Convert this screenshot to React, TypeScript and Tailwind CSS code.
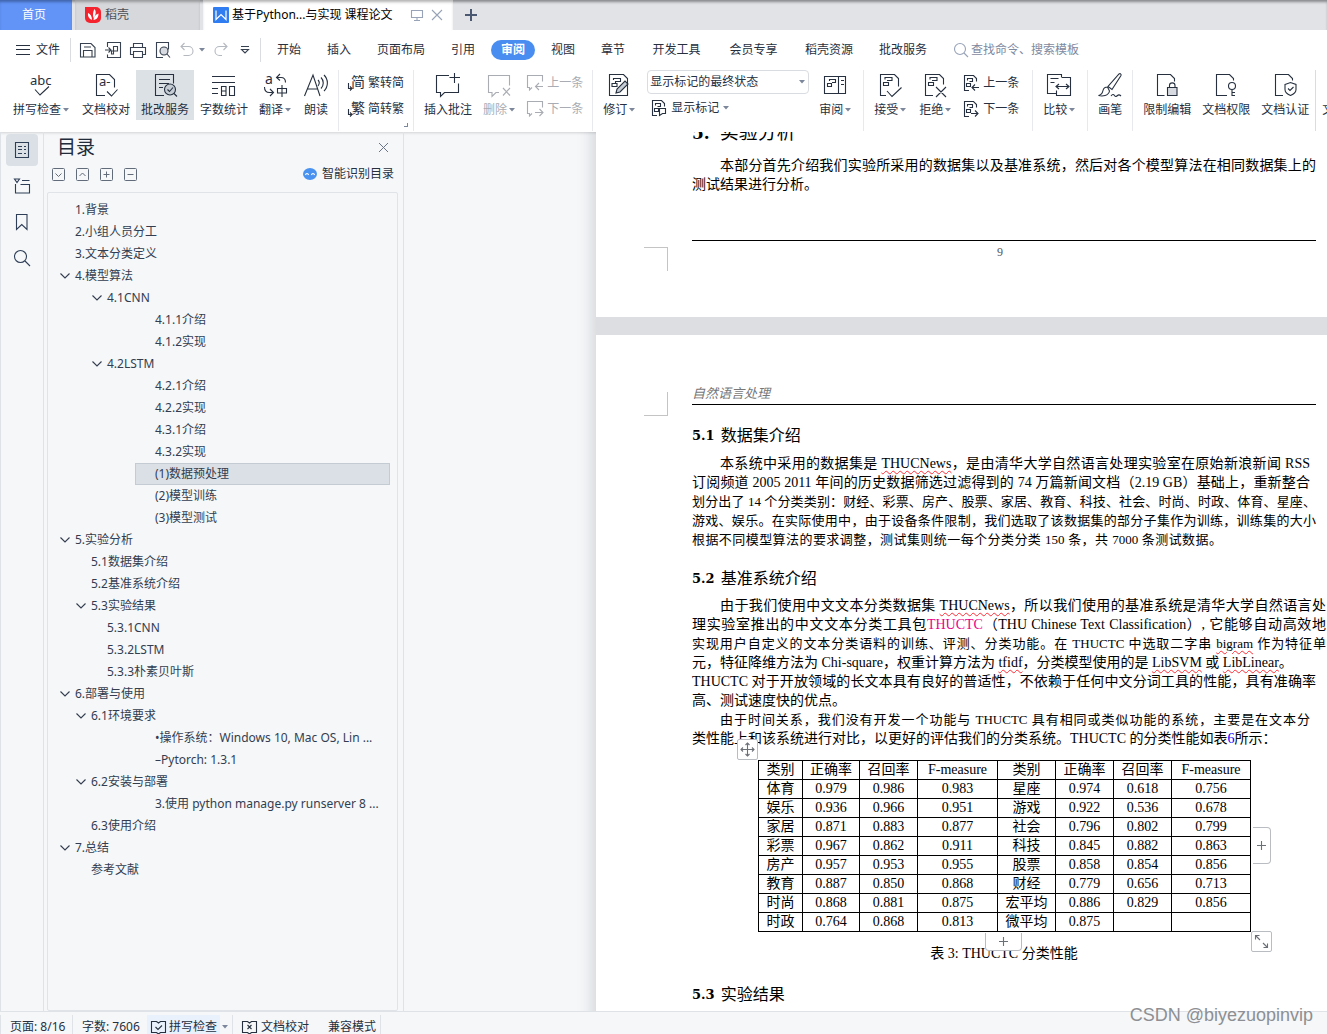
import { useState } from "react";
import type { ReactNode } from "react";
import { clsx } from "clsx";

const UI_FONT = "font-['Noto_Sans','Noto_Sans_CJK_SC',sans-serif]";
const DOC_FONT = "font-['Liberation_Serif','Noto_Sans_CJK_SC',serif]";

type IconProps = { w?: number; h?: number; className?: string; children: ReactNode };

function Icon({ w = 24, h = 24, className, children }: IconProps) {
  return (
    <svg
      width={w}
      height={h}
      viewBox={`0 0 ${w} ${h}`}
      fill="none"
      stroke="currentColor"
      strokeWidth="1.1"
      className={clsx("shrink-0 overflow-visible", className)}
      aria-hidden="true"
    >
      {children}
    </svg>
  );
}

function Caret({ className }: { className?: string }) {
  return (
    <svg width="6" height="4" viewBox="0 0 6 4" className={clsx("shrink-0 fill-[#7c879b]", className)} aria-hidden="true">
      <path d="M0 0h6L3 3.6z" />
    </svg>
  );
}

/* ---------- ribbon drawings ---------- */

const docOutline = "M9.5 22.5h-7v-21h13l4 4v3";

const icons = {
  spell: (
    <Icon>
      <text x="1" y="12" fontSize="13" fill="currentColor" stroke="none">abc</text>
      <path d="M6 16.5l5 5.5 9-8.5" />
    </Icon>
  ),
  proof: (
    <Icon>
      <path d="M11 22.5H2.5v-21h13l5 5v8" />
      <text x="5" y="13" fontSize="13" fill="currentColor" stroke="none">a-</text>
      <path d="M13 18.5l4.5 4.5 6-6.5" />
    </Icon>
  ),
  review: (
    <Icon>
      <path d="M11 22.5H2.5v-21h18v9M6 6.5h11M6 10.5h10M6 14.5h4" />
      <circle cx="17" cy="16.5" r="5.5" fill="#c5ccd4" />
      <path d="M14.5 16.5l2 2 3.5-4M21 20.5l3 3" />
    </Icon>
  ),
  count: (
    <Icon>
      <path d="M0 3.5h23M0 9.5h23M0 15.5h6M0 20.5h6M9.5 13.5H14v9H9.5zM17.5 13.5h5v9h-5zM9.5 18H14" />
    </Icon>
  ),
  translate: (
    <Icon>
      <text x="2" y="11" fontSize="14" fill="currentColor" stroke="none">a</text>
      <path d="M17 1l-3.5 3.5 3.5 3M14 4.5h4c3 0 4.5 2 4.5 5M1.5 14c0 3.5 2 5.5 5 5.5h3M7 16l3.5 3.5L7 23M14.5 15.5h9V20h-9zM19 12v12" />
    </Icon>
  ),
  read: (
    <Icon>
      <path d="M.5 23L9 2l7 21M3.5 16h10M14 7c1.5 1.5 1.5 4 0 6M17 4.5c3 3 3 8 0 11M20 2c4.5 4.5 4.5 11.5 0 16" />
    </Icon>
  ),
  comment: (
    <Icon>
      <path d="M13 2.5H.5v17h4v4l4-4h14v-9M18.5 0v10M13.5 4.5H24" />
    </Icon>
  ),
  remove: (
    <Icon>
      <path d="M12 19.5H9l-4 4v-4H1.5v-17h21v10M16 15l7 7.5M23 15l-7 7.5" />
    </Icon>
  ),
  revise: (
    <Icon>
      <path d="M2.5 1.5h14l4 4v17h-18zM6.5 7V5.5h7v3H8.5v2M5 10.5h5v3H5z" />
      <path d="M9 20l1-4 8-8 3 3-8 8z" fill="#c5ccd4" />
    </Icon>
  ),
  pane: (
    <Icon>
      <path d="M1.5 3.5h21v17h-21zM15.5 3.5v17M18 7.5h3M18 11.5h3M6.5 8V6.5h6v3H9M4.5 10.5h4v3h-4z" />
    </Icon>
  ),
  accept: (
    <Icon>
      <path d="M8 22.5H2.5v-21h14l4 4v8M7 6.5v-2h7v3H9M5.5 9.5h5v3h-5zM9 18l5 5.5 9.5-9" />
    </Icon>
  ),
  reject: (
    <Icon>
      <path d="M10 22.5H2.5v-21h14l4 4v6M7 6.5v-2h7v3H9M5.5 9.5h5v3h-5zM13 14l10 10M23 14L13 24" />
    </Icon>
  ),
  compare: (
    <Icon>
      <path d="M9 20.5H.5v-19h14v3M3.5 5.5h8M3.5 9.5h4M15 4.5h8.5v18h-14v-5M9.5 13.5h12M12 11l-3 2.5 3 2.5M19 11l3 2.5-3 2.5" />
    </Icon>
  ),
  brush: (
    <Icon>
      <path d="M22 .5c1 .5 1.5 1 1 2l-9 14-4-3L21 1zM9.5 14c-2.5 0-4 1-4.5 3.5S3 22 .5 22.5c4 1 10 .5 11-4.5l-2-4M13 23c1.5-2 2.5-2 3.5-.5s2 1 3 0 2-1 3.5.5" />
    </Icon>
  ),
  lock: (
    <Icon>
      <path d={docOutline} />
      <path d="M12.5 14.5H22v8h-9.5z" fill="#d7dbe1" />
      <path d="M14.5 14.5v-2c0-3.5 5.5-3.5 5.5 0v2" />
    </Icon>
  ),
  key: (
    <Icon>
      <path d="M13 22.5H2.5v-21h13l4 4v2" />
      <circle cx="18" cy="13" r="3.5" />
      <path d="M18 16.5V23M18 19.5h3M18 22.5h3" />
    </Icon>
  ),
  shield: (
    <Icon>
      <path d="M10 22.5H2.5v-21h13l4 4v2M12 11.5l5.5-2 5.5 2v5c0 3-3 5-5.5 6-2.5-1-5.5-3-5.5-6zM15 15.5l2 2 3.5-3.5" />
    </Icon>
  ),
};

function PrevComment({ next = false }: { next?: boolean }) {
  return (
    <Icon w={16} h={16}>
      <path d="M5 12.5L2.5 15v-2.5h-2V.5h15v6" />
      {next ? <path d="M8 11.5h7.5M12.5 8l3.5 3.5-3.5 3.5" /> : <path d="M16 11.5H8.5M12 8l-3.5 3.5L12 15" />}
    </Icon>
  );
}

function PrevChange({ next = false }: { next?: boolean }) {
  return (
    <Icon w={16} h={16}>
      <path d="M6 15.5H1.5V.5h9l3 3v3M4.5 5.5v-2h5v3h-3M3.5 8.5h4v3h-4z" />
      {next ? <path d="M8 12.5h7M12 9.5l3 3-3 3" /> : <path d="M16 12.5H9M12 9.5l-3 3 3 3" />}
    </Icon>
  );
}

function Convert({ glyph }: { glyph: string }) {
  return (
    <Icon w={16} h={16}>
      <text x="3" y="12" fontSize="14" fill="currentColor" stroke="none">{glyph}</text>
      <path d="M.5 8v5.5H4M2 11.5l2 2-2 2" />
    </Icon>
  );
}

/* ---------- ribbon controls ---------- */

type BigProps = { icon: ReactNode; label: string; caret?: boolean; active?: boolean; disabled?: boolean };

function BigButton({ icon, label, caret, active, disabled }: BigProps) {
  return (
    <button
      disabled={disabled}
      className={clsx(
        "flex h-[50px] shrink-0 flex-col items-center pt-[3px]",
        caret ? "pr-[7px] pl-[5px]" : "px-[5px]",
        active && "bg-[#dce1e6]",
        disabled ? "text-[#a9acb2]" : "text-[#26303f]",
      )}
    >
      {icon}
      <span className="mt-[5px] flex items-center gap-[2px] leading-4">
        {label}
        {caret && <Caret />}
      </span>
    </button>
  );
}

function SmallButton({ icon, label, disabled }: { icon: ReactNode; label: string; disabled?: boolean }) {
  return (
    <button
      disabled={disabled}
      className={clsx("flex h-[26px] items-center gap-1 px-1", disabled ? "text-[#a9acb2]" : "text-[#26303f]")}
    >
      {icon}
      {label}
    </button>
  );
}

function Divider() {
  return <div className="mx-1 h-[61px] w-px shrink-0 bg-[#e7e9ec]" />;
}

function TabBar() {
  return (
    <header className="flex h-[30px] shrink-0 items-stretch bg-[#e1e3e7] shadow-[inset_0_3px_3px_-1px_rgba(0,0,0,0.4)]">
      <button className="w-[72px] shrink-0 bg-[#5b8ff9]/95 pr-1 text-white shadow-[inset_0_3px_3px_-1px_rgba(0,0,0,0.3)]">首页</button>
      <button className="ml-[3px] flex w-[125px] shrink-0 items-center gap-1 bg-[#d6d8db] pl-[10px] text-[#4b4f57] shadow-[inset_0_3px_3px_-1px_rgba(0,0,0,0.3)]">
        <svg width="16" height="16" viewBox="0 0 16 16" aria-hidden="true">
          <path d="M0 0h11a5 5 0 0 1 5 5v6a5 5 0 0 1-5 5H5a5 5 0 0 1-5-5z" fill="#f5232e" />
          <path d="M9.5 2c2 2.5 1.5 6-1 9-1-3-.5-6.5 1-9zM3 6c2.5 1 4 3.5 4 7-2.5-1-4.5-3.5-4-7zM13.5 6.5c0 3.5-1.5 6-5 6.5 0-3 2-5.5 5-6.5z" fill="#fff" />
        </svg>
        稻壳
      </button>
      <div className="ml-[3px] flex w-[250px] shrink-0 items-center bg-white pl-[10px] text-black shadow-[inset_0_3px_3px_-1px_rgba(0,0,0,0.3)]">
        <svg width="16" height="16" viewBox="0 0 16 16" aria-hidden="true">
          <rect width="16" height="16" rx="1" fill="#2f7df0" />
          <path d="M3 3.5v9l5-5 5 5v-9" fill="none" stroke="#fff" strokeWidth="1.2" />
        </svg>
        <span className="ml-[3px] whitespace-nowrap">基于Python...与实现 课程论文</span>
        <div className="ml-auto flex items-center gap-2 pr-[10px] text-[#98a3b8]">
          <button aria-label="窗口" className="flex">
            <Icon w={12} h={12}>
              <path d="M.5 1.5h11v7H.5zM6 8.5v3M3 11.5h6" />
            </Icon>
          </button>
          <button aria-label="关闭标签" className="flex">
            <Icon w={12} h={12}>
              <path d="M1 1l10 10M11 1L1 11" />
            </Icon>
          </button>
        </div>
      </div>
      <button aria-label="新建" className="flex w-9 items-center justify-center text-[#4a5872]">
        <Icon w={12} h={12}>
          <path d="M6 0v12M0 6h12" strokeWidth="2" />
        </Icon>
      </button>
    </header>
  );
}

const menuTabs = ["开始", "插入", "页面布局", "引用", "审阅", "视图", "章节", "开发工具", "会员专享", "稻壳资源", "批改服务"];

function MenuBar() {
  const [current, setCurrent] = useState("审阅");
  return (
    <nav className="flex h-9 shrink-0 items-center bg-white pt-1 pl-4 text-[#26303f]">
      <button className="flex items-center gap-[6px]">
        <Icon w={14} h={10}>
          <path d="M0 .5h14M0 4.5h14M0 9.5h14" />
        </Icon>
        文件
      </button>
      <div className="ml-[10px] h-6 w-px bg-[#d9dce1]" />
      <div className="flex w-[189px] items-center gap-[9px] pl-[9px] text-[#37414f]">
        <button aria-label="保存">
          <Icon w={16} h={16}>
            <path d="M.5 1.5H11l4 4V15H.5zM3.5 15V8.5H12V15M4 5h7" />
          </Icon>
        </button>
        <button aria-label="输出为PDF">
          <Icon w={16} h={16}>
            <path d="M2.5 5V.5h13v15h-13v-3M0 8h6M3.5 5.5L6 8l-2.5 2.5M8.5 12V4.5h4V9h-6v3z" />
          </Icon>
        </button>
        <button aria-label="打印">
          <Icon w={16} h={16}>
            <path d="M3.5 5V1.5h9V5M3.5 12.5h-3v-7h15v7h-3M3.5 9.5h9v6h-9z" />
          </Icon>
        </button>
        <button aria-label="打印预览">
          <Icon w={16} h={16}>
            <path d="M8 15.5H1.5V.5h12v7" />
            <circle cx="9" cy="9" r="4" fill="#d7dbe1" />
            <path d="M12 12l3 3.5" />
          </Icon>
        </button>
        <button aria-label="撤销" className="flex items-center gap-[5px] text-[#b4b8bf]">
          <Icon w={14} h={16}>
            <path d="M4.5 1L1 4.5 4.5 8M1 4.5h7.5a4.5 4.5 0 0 1 0 9h-5" />
          </Icon>
          <Caret />
        </button>
        <button aria-label="恢复" className="text-[#b4b8bf]">
          <Icon w={14} h={16}>
            <path d="M9.5 1L13 4.5 9.5 8M13 4.5H5.5a4.5 4.5 0 0 0 0 9H8" />
          </Icon>
        </button>
        <button aria-label="更多" className="ml-1">
          <Icon w={8} h={8}>
            <path d="M0 .5h8M.5 3.5h7L4 7z" />
          </Icon>
        </button>
      </div>
      <div className="h-6 w-px bg-[#d9dce1]" />
      <div className="flex items-center pl-[3px]">
        {menuTabs.map((tab) => (
          <button
            key={tab}
            onClick={() => setCurrent(tab)}
            className={clsx(
              "flex h-5 shrink-0 items-center justify-center whitespace-nowrap",
              tab === "开发工具" || tab === "会员专享" ? "w-[77px]" : tab.length === 2 ? "w-[50px]" : "w-[74px]",
            )}
          >
            <span className={clsx(tab === current && "rounded-full bg-[#4a8df0] px-[10px] leading-5 font-bold text-white")}>
              {tab}
            </span>
          </button>
        ))}
      </div>
      <label className="ml-[14px] flex min-w-0 flex-1 items-center gap-[2px] text-[#98a3b8]">
        <Icon w={15} h={15}>
          <circle cx="6" cy="6" r="5.5" />
          <path d="M10 10l4 4" />
        </Icon>
        <input
          aria-label="查找命令"
          placeholder="查找命令、搜索模板"
          className="w-full min-w-0 bg-transparent outline-none placeholder:text-[#7e89a0]"
        />
      </label>
    </nav>
  );
}

function Ribbon() {
  return (
    <div className="relative z-20 flex h-[66px] shrink-0 items-start gap-px overflow-hidden bg-white pt-1 pl-2 whitespace-nowrap">
      <BigButton icon={icons.spell} label="拼写检查" caret />
      <BigButton icon={icons.proof} label="文档校对" />
      <BigButton icon={icons.review} label="批改服务" active />
      <BigButton icon={icons.count} label="字数统计" />
      <BigButton icon={icons.translate} label="翻译" caret />
      <BigButton icon={icons.read} label="朗读" />
      <Divider />
      <div className="flex w-16 shrink-0 flex-col">
        <SmallButton icon={<Convert glyph="简" />} label="繁转简" />
        <SmallButton icon={<Convert glyph="繁" />} label="简转繁" />
        <div className="mt-px size-1 self-end border-r border-b border-[#7c879b]" />
      </div>
      <Divider />
      <BigButton icon={icons.comment} label="插入批注" />
      <BigButton icon={icons.remove} label="删除" caret disabled />
      <div className="flex w-16 shrink-0 flex-col">
        <SmallButton icon={<PrevComment />} label="上一条" disabled />
        <SmallButton icon={<PrevComment next />} label="下一条" disabled />
      </div>
      <Divider />
      <BigButton icon={icons.revise} label="修订" caret />
      <div className="ml-1 flex w-[162px] shrink-0 flex-col">
        <div className="relative flex h-6 items-center rounded-sm border border-[#d9dce1]">
          <select aria-label="显示标记的状态" className="h-full w-full appearance-none bg-transparent pl-[2px] text-[#26303f] outline-none">
            <option>显示标记的最终状态</option>
            <option>显示标记的原始状态</option>
          </select>
          <Caret className="pointer-events-none absolute right-[3px]" />
        </div>
        <button className="flex h-7 items-center gap-1 pl-1 text-[#26303f]">
          <Icon w={16} h={16}>
            <path d="M6 15.5H1.5V.5h9l3 3v3M4.5 5.5v-2h5v3h-3M3.5 8.5h4v3h-4zM8.5 8.5h6v5h-3l-3 2z" />
          </Icon>
          显示标记
          <Caret />
        </button>
      </div>
      <div className="w-[3px] shrink-0" />
      <BigButton icon={icons.pane} label="审阅" caret />
      <Divider />
      <BigButton icon={icons.accept} label="接受" caret />
      <BigButton icon={icons.reject} label="拒绝" caret />
      <div className="mr-1 flex w-16 shrink-0 flex-col">
        <SmallButton icon={<PrevChange />} label="上一条" />
        <SmallButton icon={<PrevChange next />} label="下一条" />
      </div>
      <Divider />
      <BigButton icon={icons.compare} label="比较" caret />
      <Divider />
      <BigButton icon={icons.brush} label="画笔" />
      <Divider />
      <BigButton icon={icons.lock} label="限制编辑" />
      <BigButton icon={icons.key} label="文档权限" />
      <BigButton icon={icons.shield} label="文档认证" />
      <div className="h-[61px] w-px shrink-0 bg-[#d9dce1]" />
      <BigButton icon={<Icon><path d={docOutline} /></Icon>} label="文档定稿" />
    </div>
  );
}

/* ---------- outline panel ---------- */

type OutlineItem = { text: string; level: 0 | 1 | 2 | 5; open?: boolean };

const outline: OutlineItem[] = [
  { text: "1.背景", level: 0 },
  { text: "2.小组人员分工", level: 0 },
  { text: "3.文本分类定义", level: 0 },
  { text: "4.模型算法", level: 0, open: true },
  { text: "4.1CNN", level: 2, open: true },
  { text: "4.1.1介绍", level: 5 },
  { text: "4.1.2实现", level: 5 },
  { text: "4.2LSTM", level: 2, open: true },
  { text: "4.2.1介绍", level: 5 },
  { text: "4.2.2实现", level: 5 },
  { text: "4.3.1介绍", level: 5 },
  { text: "4.3.2实现", level: 5 },
  { text: "(1)数据预处理", level: 5 },
  { text: "(2)模型训练", level: 5 },
  { text: "(3)模型测试", level: 5 },
  { text: "5.实验分析", level: 0, open: true },
  { text: "5.1数据集介绍", level: 1 },
  { text: "5.2基准系统介绍", level: 1 },
  { text: "5.3实验结果", level: 1, open: true },
  { text: "5.3.1CNN", level: 2 },
  { text: "5.3.2LSTM", level: 2 },
  { text: "5.3.3朴素贝叶斯", level: 2 },
  { text: "6.部署与使用", level: 0, open: true },
  { text: "6.1环境要求", level: 1, open: true },
  { text: "•操作系统：Windows 10, Mac OS, Lin ...", level: 5 },
  { text: "–Pytorch: 1.3.1", level: 5 },
  { text: "6.2安装与部署", level: 1, open: true },
  { text: "3.使用 python manage.py runserver 8 ...", level: 5 },
  { text: "6.3使用介绍", level: 1 },
  { text: "7.总结", level: 0, open: true },
  { text: "参考文献", level: 1 },
];

const indents = { 0: "ml-0", 1: "ml-4", 2: "ml-8", 5: "ml-20" };

const foldButtons = [
  { label: "展开", d: "M3.5 5.5l3 3 3-3" },
  { label: "收起", d: "M3.5 8l3-3 3 3" },
  { label: "增加级别", d: "M6.5 3.5v6M3.5 6.5h6" },
  { label: "减少级别", d: "M3.5 6.5h6" },
];

function Rail() {
  const button = "flex size-8 items-center justify-center rounded-sm";
  return (
    <aside className="flex w-11 shrink-0 flex-col items-center gap-1 border-x border-[#dfe3e8] pt-[2px] text-[#2f3e57]">
      <button aria-label="目录" className={clsx(button, "bg-[#dae0e6]")}>
        <Icon w={14} h={16}>
          <path d="M.5.5h13v15H.5zM3 4.5h4M9 4.5h2M3 7.5h4M9 7.5h2M3 11.5h4M9 11.5h2" />
        </Icon>
      </button>
      <button aria-label="章节" className={button}>
        <Icon w={16} h={16}>
          <path d="M8 2.500h7.500M1.500 6v9h14V6.500h-9M.5 1h5L3 4.500z" />
        </Icon>
      </button>
      <button aria-label="书签" className={button}>
        <Icon w={12} h={18}>
          <path d="M.5 1.5H11v15l-5.250-5-5.250 5z" />
        </Icon>
      </button>
      <button aria-label="查找" className={button}>
        <Icon w={16} h={16}>
          <circle cx="6.5" cy="6.5" r="6" />
          <path d="M11 11l5 5" />
        </Icon>
      </button>
    </aside>
  );
}

function OutlinePanel() {
  const [selected, setSelected] = useState("(1)数据预处理");
  return (
    <section className="flex w-[360px] shrink-0 flex-col border-r border-[#dfe3e8] pr-[5px] pl-[3px] text-[#333d4f]">
      <div className="flex h-[30px] items-center justify-between pr-[9px] pl-[10px]">
        <h2 className="text-[19px] leading-6 text-[#222b3a]">目录</h2>
        <button aria-label="关闭" className="text-[#6b7587]">
          <Icon w={11} h={11}>
            <path d="M1 1l9 9M10 1l-9 9" strokeWidth="1" />
          </Icon>
        </button>
      </div>
      <div className="flex h-[30px] items-center pb-[6px] pl-[5px]">
        <div className="flex gap-[11px] text-[#626b7a]">
          {foldButtons.map((b) => (
            <button key={b.label} aria-label={b.label} className="flex">
              <Icon w={13} h={13}>
                <rect x="0.5" y="0.5" width="12" height="12" rx="1" strokeWidth="1" />
                <path d={b.d} strokeWidth="1" />
              </Icon>
            </button>
          ))}
        </div>
        <button className="ml-auto flex items-center gap-[5px] pr-1 text-[#26303f]">
          <svg width="14" height="12" viewBox="0 0 14 12" aria-hidden="true">
            <ellipse cx="7" cy="6" rx="7" ry="6" fill="#4a92f0" />
            <path d="M2.500 7c.5-2 2.500-2 3 0M8.500 7c.5-2 2.500-2 3 0" fill="none" stroke="#fff" strokeWidth="1.2" />
          </svg>
          智能识别目录
        </button>
      </div>
      <ul className="flex-1 rounded-xs border border-[#e0e4e9] px-[7px] pt-[6px]">
        {outline.map((item) => (
          <li key={item.text} className={clsx("flex h-[22px]", indents[item.level])}>
            <button
              onClick={() => setSelected(item.text)}
              className={clsx(
                "flex min-w-0 flex-1 items-center border text-left whitespace-nowrap",
                item.text === selected ? "border-[#c5cbd3] bg-[#dae0e6]" : "border-transparent",
              )}
            >
              <span className="flex w-[19px] shrink-0 justify-center pr-px">
                {item.open && (
                  <Icon w={10} h={6}>
                    <path d="M.5.5L5 5 9.5.5" />
                  </Icon>
                )}
              </span>
              {item.text}
            </button>
          </li>
        ))}
      </ul>
    </section>
  );
}

/* ---------- document ---------- */

const lineKinds = {
  full: "w-[624px] [text-align-last:justify]",
  wide: "w-[634px] [text-align-last:justify]",
  short: "w-[618px] [text-align-last:justify]",
  partial: "w-[530px] [text-align-last:justify]",
  end: "",
};

type LineProps = { kind?: keyof typeof lineKinds; indent?: boolean; dense?: boolean; children: ReactNode };

function Line({ kind = "full", indent, dense, children }: LineProps) {
  return (
    <span
      className={clsx(
        "block whitespace-nowrap leading-[19px]",
        lineKinds[kind],
        indent && "pl-7",
        dense ? "text-[13px]" : "text-[14px]",
      )}
    >
      {children}
    </span>
  );
}

function Typo({ children }: { children: ReactNode }) {
  return <span className="underline decoration-red-500 decoration-wavy decoration-1 underline-offset-2">{children}</span>;
}

function Heading({ no, children }: { no: string; children: ReactNode }) {
  return (
    <h3 className="flex items-center gap-[6px] text-base leading-6">
      <span className="font-['DejaVu_Serif',serif] text-[13px] font-bold">{no}</span>
      {children}
    </h3>
  );
}

const tableHead = ["类别", "正确率", "召回率", "F-measure", "类别", "正确率", "召回率", "F-measure"];
const tableRows = [
  ["体育", "0.979", "0.986", "0.983", "星座", "0.974", "0.618", "0.756"],
  ["娱乐", "0.936", "0.966", "0.951", "游戏", "0.922", "0.536", "0.678"],
  ["家居", "0.871", "0.883", "0.877", "社会", "0.796", "0.802", "0.799"],
  ["彩票", "0.967", "0.862", "0.911", "科技", "0.845", "0.882", "0.863"],
  ["房产", "0.957", "0.953", "0.955", "股票", "0.858", "0.854", "0.856"],
  ["教育", "0.887", "0.850", "0.868", "财经", "0.779", "0.656", "0.713"],
  ["时尚", "0.868", "0.881", "0.875", "宏平均", "0.886", "0.829", "0.856"],
  ["时政", "0.764", "0.868", "0.813", "微平均", "0.875", "", ""],
];
const columns = ["w-11", "w-[57px]", "w-[58px]", "w-20", "w-[58px]", "w-[58px]", "w-[58px]", "w-[79px]"];

function ResultTable() {
  const handle = "absolute z-10 flex items-center justify-center border border-[#b9bcc1] bg-white text-[#6b6f76]";
  return (
    <div className="relative ml-[66px] w-[493px]">
      <table className="w-full table-fixed border-collapse text-center text-[14px] leading-[18px]">
        <colgroup>
          {columns.map((c, i) => (
            <col key={i} className={c} />
          ))}
        </colgroup>
        <thead>
          <tr>
            {tableHead.map((h, i) => (
              <th key={i} className="h-[19px] border border-black p-0 font-normal whitespace-nowrap">{h}</th>
            ))}
          </tr>
        </thead>
        <tbody>
          {tableRows.map((row) => (
            <tr key={row[0]}>
              {row.map((cell, i) => (
                <td key={i} className="h-[19px] border border-black p-0">{cell}</td>
              ))}
            </tr>
          ))}
        </tbody>
      </table>
      <button aria-label="移动表格" className={clsx(handle, "-top-[21px] -left-[21px] size-[21px] rounded-xs")}>
        <Icon w={15} h={15}>
          <path d="M7.5 1v13M1 7.5h13M5.5 3l2-2 2 2M5.5 12l2 2 2-2M3 5.5l-2 2 2 2M12 5.5l2 2-2 2" />
        </Icon>
      </button>
      <button aria-label="添加列" className={clsx(handle, "top-[67px] left-[495px] h-[37px] w-[18px] rounded-r-sm border-l-0")}>
        <Icon w={9} h={9}>
          <path d="M4.5 0v9M0 4.5h9" />
        </Icon>
      </button>
      <button aria-label="添加行" className={clsx(handle, "top-[173px] left-[227px] h-[18px] w-[37px] rounded-b-sm border-t-0 bg-[#f7f7f7]")}>
        <Icon w={9} h={9}>
          <path d="M4.5 0v9M0 4.5h9" />
        </Icon>
      </button>
      <button aria-label="缩放表格" className={clsx(handle, "top-[171px] left-[493px] size-[21px] rounded-xs")}>
        <Icon w={15} h={15}>
          <path d="M1.5 5.5v-4h4M2 2l4 4M13.5 9.5v4h-4M13 13l-4-4" />
        </Icon>
      </button>
    </div>
  );
}

function Document() {
  return (
    <main className={clsx("min-w-0 flex-1 overflow-hidden pl-48 text-black", DOC_FONT)}>
      <div className="bg-[#dcdee1] shadow-[-2px_0_14px_2px_rgba(60,65,75,0.18)]">
        <article className="-mt-[14px] h-[199px] bg-white">
          <h2 className="flex items-center gap-[10px] pl-24 text-[19px] leading-[30px]">
            <span className="font-['DejaVu_Serif',serif] text-[17px] font-bold">5.</span>
            实验分析
          </h2>
          <p className="mt-2 pl-24">
            <Line indent>本部分首先介绍我们实验所采用的数据集以及基准系统，然后对各个模型算法在相同数据集上的</Line>
            <Line kind="end">测试结果进行分析。</Line>
          </p>
          <div className="mt-[46px] flex items-start">
            <div className="mt-[7px] ml-12 size-6 border-t border-r border-[#c4c4c4]" />
            <div className="ml-6 w-[624px] shrink-0 border-t border-black pt-[3px] pr-2 text-center text-[12px] leading-4 text-[#555]">9</div>
          </div>
        </article>
        <article className="mt-[18px] bg-white pt-[49px]">
          <div className="flex items-start">
            <div className="mt-2 ml-12 size-6 border-r border-b border-[#c4c4c4]" />
            <div className="ml-6 w-[624px] shrink-0 border-b border-black text-[13px] leading-5 text-[#777] italic">自然语言处理</div>
          </div>
          <div className="mt-2 pl-24">
            <Heading no="5.1">数据集介绍</Heading>
            <p className="mt-[6px]">
              <Line kind="short" indent>本系统中采用的数据集是 <Typo>THUCNews</Typo>，是由清华大学自然语言处理实验室在原始新浪新闻 RSS</Line>
              <Line kind="short">订阅频道 2005 2011 年间的历史数据筛选过滤得到的 74 万篇新闻文档（2.19 GB）基础上，重新整合</Line>
              <Line dense>划分出了 14 个分类类别：财经、彩票、房产、股票、家居、教育、科技、社会、时尚、时政、体育、星座、</Line>
              <Line dense>游戏、娱乐。在实际使用中，由于设备条件限制，我们选取了该数据集的部分子集作为训练，训练集的大小</Line>
              <Line kind="partial" dense>根据不同模型算法的要求调整，测试集则统一每个分类分类 150 条，共 7000 条测试数据。</Line>
            </p>
            <div className="mt-[18px]">
              <Heading no="5.2">基准系统介绍</Heading>
            </div>
            <p className="mt-[5px]">
              <Line kind="wide" indent>由于我们使用中文文本分类数据集 <Typo>THUCNews</Typo>，所以我们使用的基准系统是清华大学自然语言处</Line>
              <Line kind="wide">理实验室推出的中文文本分类工具包<a href="#thuctc" className="text-[#ec008c]">THUCTC</a>（THU Chinese Text Classification）, 它能够自动高效地</Line>
              <Line kind="wide" dense>实现用户自定义的文本分类语料的训练、评测、分类功能。在 THUCTC 中选取二字串 <Typo>bigram</Typo> 作为特征单</Line>
              <Line kind="end">元，特征降维方法为 Chi-square，权重计算方法为 <Typo>tfidf</Typo>，分类模型使用的是 <Typo>LibSVM</Typo> 或 <Typo>LibLinear</Typo>。</Line>
              <Line>THUCTC 对于开放领域的长文本具有良好的普适性，不依赖于任何中文分词工具的性能，具有准确率</Line>
              <Line kind="end">高、测试速度快的优点。</Line>
              <Line kind="short" indent dense>由于时间关系，我们没有开发一个功能与 THUCTC 具有相同或类似功能的系统，主要是在文本分</Line>
              <Line kind="end">类性能上和该系统进行对比，以更好的评估我们的分类系统。THUCTC 的分类性能如表<a href="#table6" className="text-[#0000ff]">6</a>所示：</Line>
            </p>
            <div className="mt-3">
              <ResultTable />
            </div>
            <p className="mt-3 w-[624px] text-center text-[14px] leading-[19px]">表 3: THUCTC 分类性能</p>
            <div className="mt-5 pb-10">
              <Heading no="5.3">实验结果</Heading>
            </div>
          </div>
        </article>
      </div>
    </main>
  );
}

/* open book with a notch at the top and bottom of the spine */
const bookOutline = "M5.5 1.5h-5v11h5l2 1.5 2-1.5h5v-11h-5l-2 1.5-2-1.5z";

function StatusBar() {
  const line = "h-5 w-px shrink-0 bg-[#dfe3e8]";
  return (
    <footer className="flex h-[23px] shrink-0 items-start overflow-hidden border-t border-[#dfe3e8] bg-[#f5f7f9] pt-[3px] leading-6 whitespace-nowrap text-[#26303f]">
      <div className={line} />
      <span className="w-[71px] pl-[9px]">页面: 8/16</span>
      <div className={line} />
      <span className="w-[74px] pl-[9px]">字数: 7606</span>
      <button className="flex h-6 items-center gap-[3px] bg-[#e8f1fc] pr-[3px] pl-1">
        <Icon w={15} h={14}>
          <path d={bookOutline} />
          <path d="M4.500 7l2.500 2.500 4-4" />
        </Icon>
        拼写检查
      </button>
      <button aria-label="拼写检查选项" className="flex h-6 items-center pr-1 pl-[2px]">
        <Caret />
      </button>
      <div className={line} />
      <button className="flex h-6 items-center gap-1 pl-[9px]">
        <Icon w={15} h={14}>
          <path d={bookOutline} />
          <path d="M5.500 5l4 4M9.500 5l-4 4" />
        </Icon>
        文档校对
      </button>
      <span className="pr-1 pl-[19px]">兼容模式</span>
      <div className={line} />
    </footer>
  );
}

export default function App() {
  return (
    <div className={clsx("relative flex h-screen flex-col overflow-hidden bg-[#f5f7f9] text-[12px]", UI_FONT)}>
      <TabBar />
      <MenuBar />
      <Ribbon />
      <div className="flex min-h-0 flex-1 overflow-hidden shadow-[inset_0_3px_3px_-2px_rgba(0,0,0,0.15)]">
        <Rail />
        <OutlinePanel />
        <Document />
      </div>
      <StatusBar />
      <div className="pointer-events-none absolute right-[14px] bottom-[7px] font-['Liberation_Sans',sans-serif] text-[18px] leading-6 text-[#8d8f93]">
        CSDN @biyezuopinvip
      </div>
    </div>
  );
}
